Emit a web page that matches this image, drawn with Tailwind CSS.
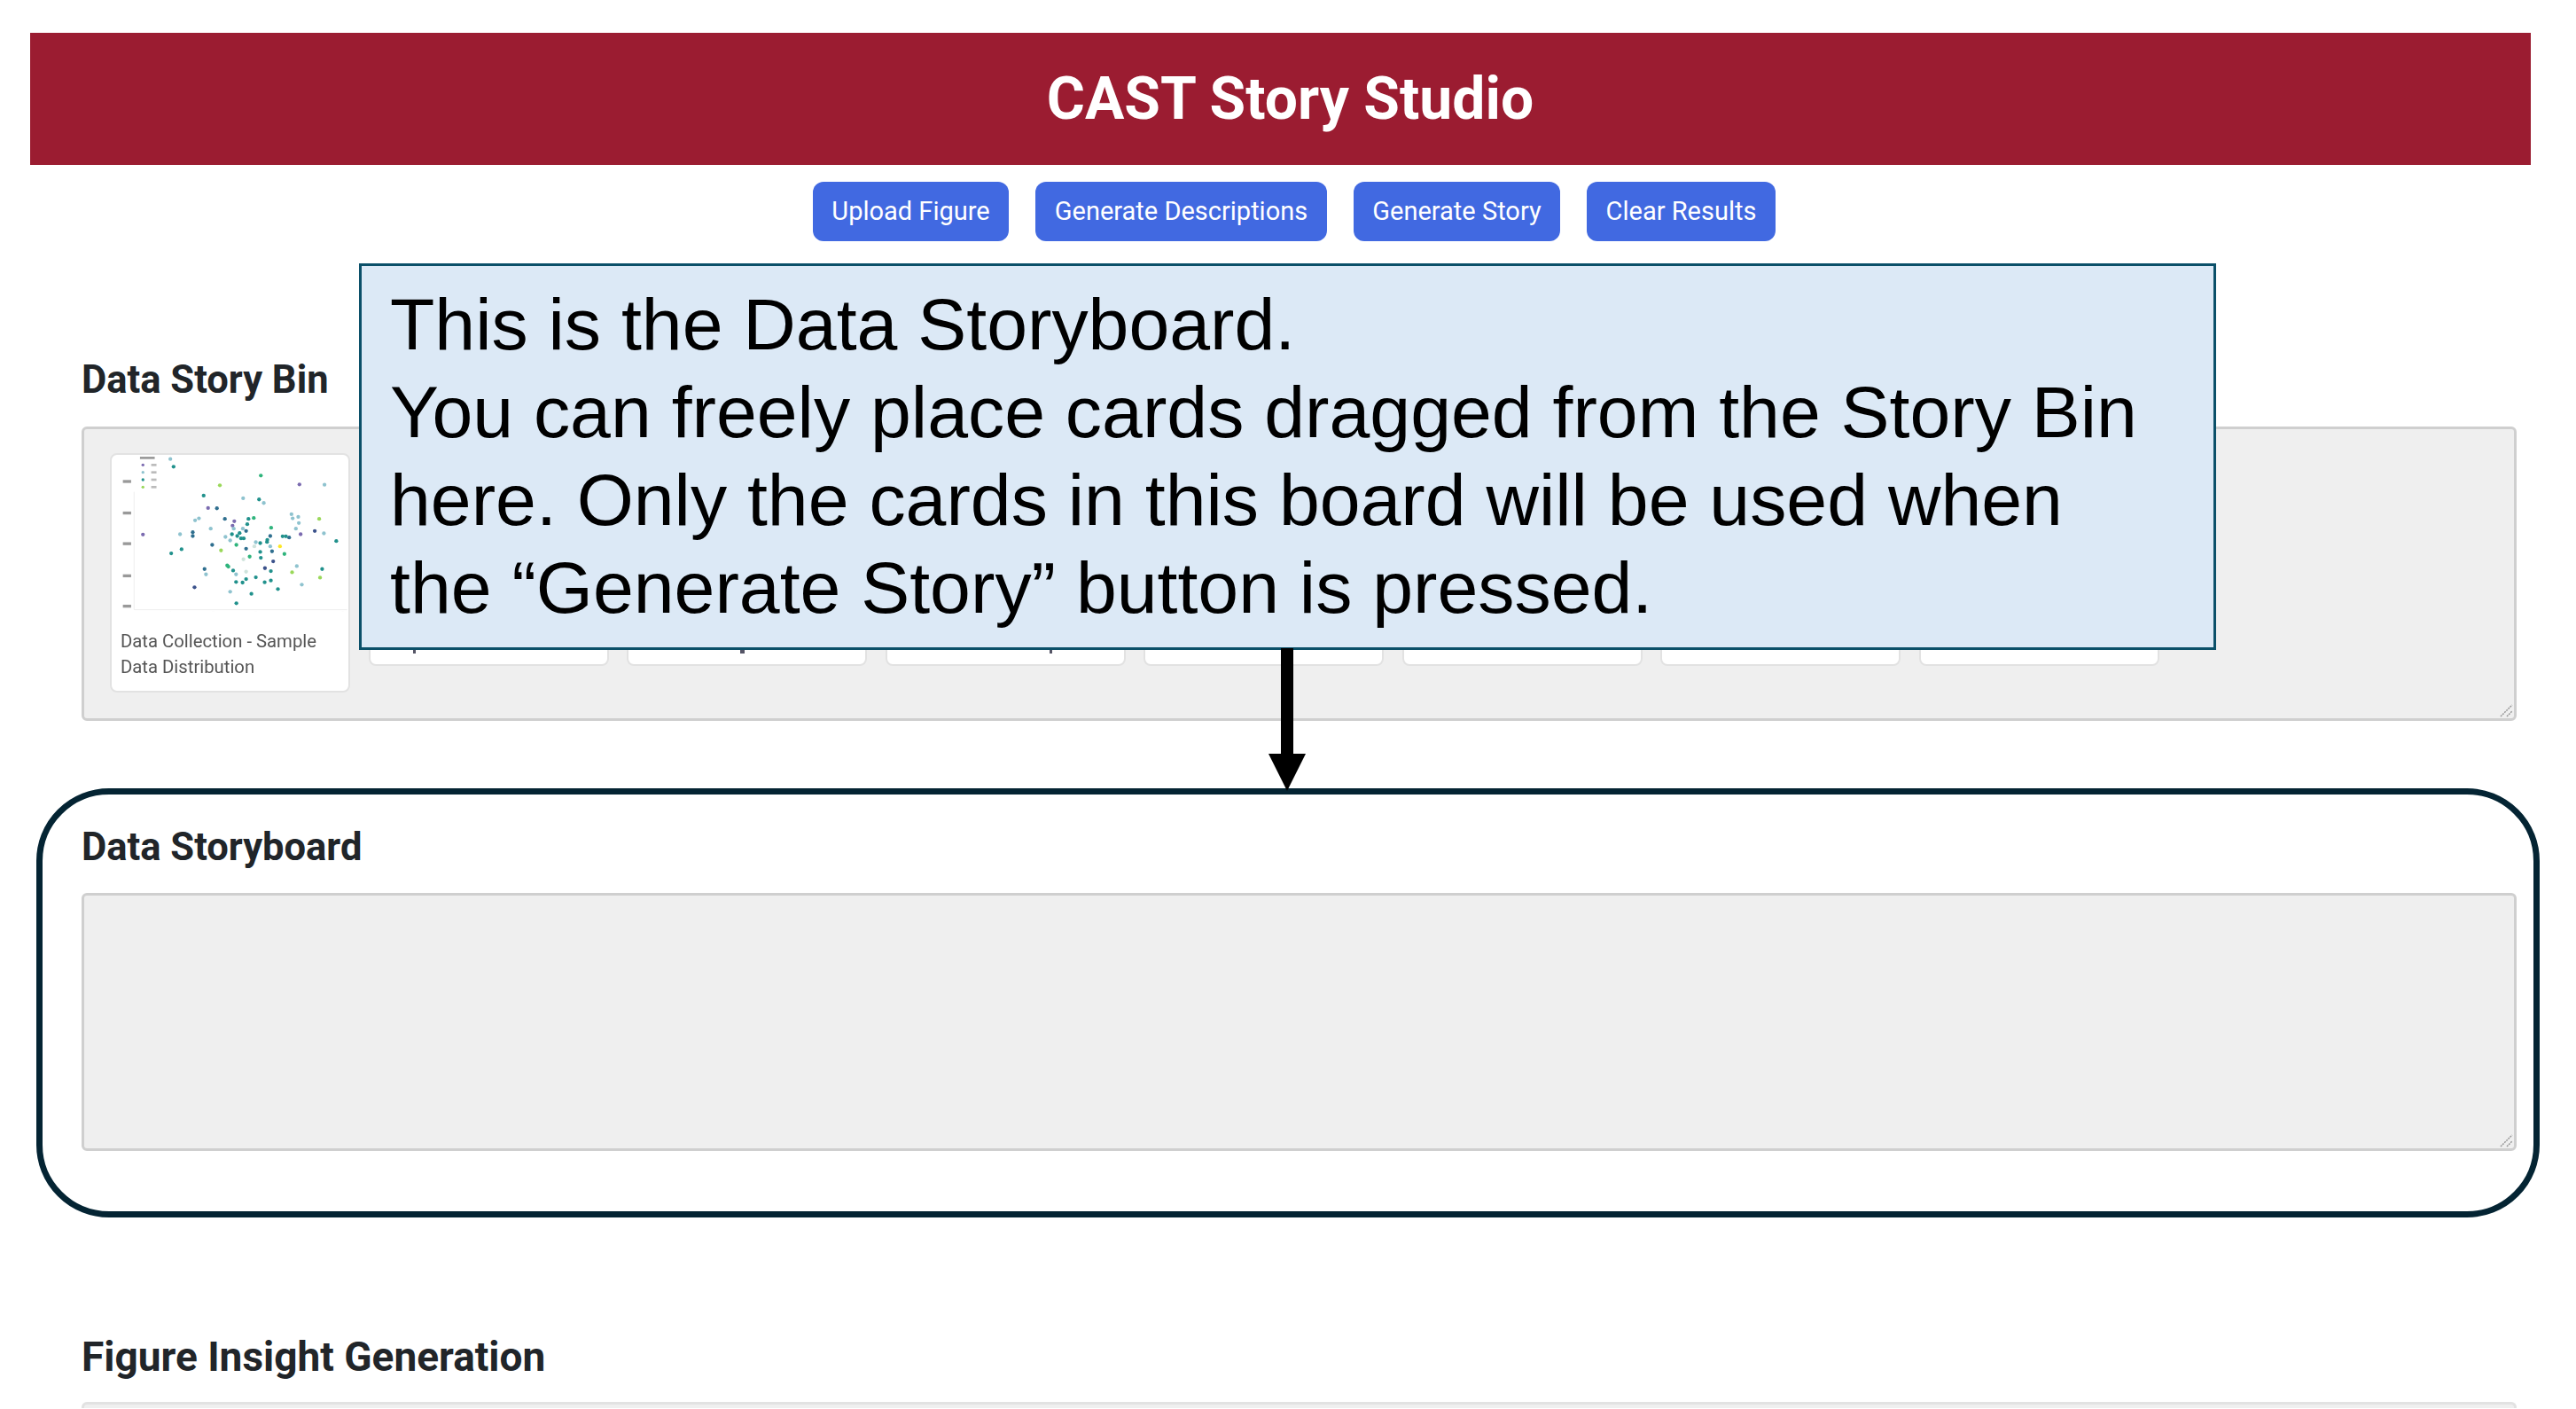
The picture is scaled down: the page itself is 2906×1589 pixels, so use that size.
<!DOCTYPE html>
<html lang="en" class="bg-white">
<head>
  <meta charset="UTF-8">
  <title>CAST Story Studio</title>
  <script src="https://cdn.jsdelivr.net/npm/@tailwindcss/browser@4"></script>
</head>
<body class="relative h-[1589px] overflow-hidden bg-white font-['Roboto',sans-serif]">
  <header class="ml-[34px] mt-[37px] flex h-[149px] w-[2821px] items-center justify-center bg-[#9b1c31] pl-[22px]">
    <h1 class="text-[66px] font-bold text-white">CAST Story Studio</h1>
  </header>

  <nav class="ml-[917px] mt-[19px] flex h-[67px] gap-[30px] text-[29px] text-white">
    <button class="w-[221px] rounded-[12px] bg-[#4169e1]">Upload Figure</button>
    <button class="w-[329px] rounded-[12px] bg-[#4169e1]">Generate Descriptions</button>
    <button class="w-[233px] rounded-[12px] bg-[#4169e1]">Generate Story</button>
    <button class="w-[213px] rounded-[12px] bg-[#4169e1]">Clear Results</button>
  </nav>

  <main class="ml-[92px] w-[2747px]">
    <h2 class="mt-[131px] text-[43.5px] leading-[52px] font-bold text-[#212529]">Data Story Bin</h2>
    <section class="relative mt-[26px] flex h-[332px] items-start gap-[20.5px] rounded-[6px] border-[3px] border-[#cfcfcf] bg-[#efefef] pl-[29px] pt-[27px]">
      <div class="h-[270px] w-[271px] shrink-0 overflow-hidden rounded-[8px] border-2 border-[#e2e2e2] bg-white">
        <svg id="scatter" width="266" height="177" viewBox="136 100 800 532" class="blur-[0.7px]"></svg>
        <p class="ml-[10px] mt-[19px] text-[20.3px] leading-[29px] text-[#555] blur-[0.4px]">Data Collection - Sample Data Distribution</p>
      </div>
      <div class="h-[240px] w-[271px] shrink-0 rounded-[8px] border-2 border-[#e2e2e2] bg-white"><div class="ml-[48px] mt-[219px] h-[5px] w-[3px] bg-[#556]"></div></div>
      <div class="h-[240px] w-[271px] shrink-0 rounded-[8px] border-2 border-[#e2e2e2] bg-white"><div class="ml-[126px] mt-[219px] h-[5px] w-[5px] bg-[#556]"></div></div>
      <div class="h-[240px] w-[271px] shrink-0 rounded-[8px] border-2 border-[#e2e2e2] bg-white"><div class="ml-[183px] mt-[219px] h-[5px] w-[3px] bg-[#556]"></div></div>
      <div class="h-[240px] w-[271px] shrink-0 rounded-[8px] border-2 border-[#e2e2e2] bg-white"></div>
      <div class="h-[240px] w-[271px] shrink-0 rounded-[8px] border-2 border-[#e2e2e2] bg-white"></div>
      <div class="h-[240px] w-[271px] shrink-0 rounded-[8px] border-2 border-[#e2e2e2] bg-white"></div>
      <div class="h-[240px] w-[271px] shrink-0 rounded-[8px] border-2 border-[#e2e2e2] bg-white"></div>
      <svg class="absolute bottom-[1px] right-[1px]" width="16" height="16" viewBox="0 0 16 16"><path d="M2 15L15 2M9 15L15 9" stroke="#999" stroke-width="1.5" stroke-dasharray="2 1"/></svg>
    </section>

    <h2 class="mt-[117px] text-[43.5px] leading-[52px] font-bold text-[#212529]">Data Storyboard</h2>
    <section class="relative mt-[25px] h-[291px] rounded-[6px] border-[3px] border-[#cfcfcf] bg-[#efefef]">
      <svg class="absolute bottom-[1px] right-[1px]" width="16" height="16" viewBox="0 0 16 16"><path d="M2 15L15 2M9 15L15 9" stroke="#999" stroke-width="1.5" stroke-dasharray="2 1"/></svg>
    </section>

    <h2 class="mt-[206px] text-[46px] leading-[52px] font-bold text-[#212529]">Figure Insight Generation</h2>
    <section class="mt-[25px] h-[7px] rounded-t-[6px] border-x-[3px] border-t-[3px] border-[#e2e2e2] bg-[#efefef]"></section>
  </main>

  <!-- annotation layer -->
  <div class="absolute left-[41px] top-[889px] h-[484px] w-[2824px] rounded-[82px] border-[7px] border-[#042433]"></div>
  <div class="absolute left-[405px] top-[297px] h-[436px] w-[2095px] border-[3px] border-[#0b5069] bg-[#dce9f6] pl-[32px] pt-[16px] font-['Liberation_Sans',sans-serif] text-[82.4px] leading-[99px] whitespace-nowrap text-black">
    This is the Data Storyboard.<br>
    You can freely place cards dragged from the Story Bin<br>
    here. Only the cards in this board will be used when<br>
    the “Generate Story” button is pressed.
  </div>
  <svg class="absolute left-[1431px] top-[731px]" width="43" height="162" viewBox="0 0 43 162">
    <rect x="14" y="0" width="14" height="120" fill="#000"/>
    <path d="M0 119H42L21 161Z" fill="#000"/>
  </svg>

  <script>
    // scatter points of the thumbnail, grouped by colour
    const groups = {
      '#2f6f8f': [[520,317],[592,358],[411,362],[411,375],[674,375],[738,380],[477,405],[592,418],[680,427],[451,487],[493,281]],
      '#3b528b': [[825,358],[656,484],[417,549],[684,461]],
      '#7b6bb0': [[773,200],[552,325],[546,340],[242,370],[777,369],[463,280]],
      '#21918c': [[346,140],[448,238],[636,251],[596,335],[600,317],[544,369],[570,365],[562,375],[575,383],[584,383],[664,388],[663,395],[716,376],[727,376],[898,392],[640,399],[338,434],[373,420],[640,429],[642,449],[558,531],[580,533],[655,532],[676,526],[700,555],[610,571],[559,603],[850,487],[676,494],[548,492],[625,515],[592,521]],
      '#2fb47c': [[642,170],[618,314],[677,347],[559,405],[722,436],[528,475],[532,479],[604,445]],
      '#9ad85a': [[503,203],[840,317],[507,424],[748,498],[843,516]],
      '#fde725': [[707,410]],
      '#8fc3cf': [[335,114],[858,201],[582,247],[652,263],[746,301],[750,315],[769,310],[771,331],[432,315],[419,322],[550,350],[761,350],[472,350],[581,350],[368,369],[522,378],[538,390],[856,366],[625,396],[674,410],[456,505],[558,505],[764,477],[781,540],[538,564]],
      '#cfe3dc': [[620,410],[583,454],[592,496]]
    };
    let marks = '<path d="M212 225V625H935" fill="none" stroke="#eee" stroke-width="3"/>';
    // y axis labels, legend and x ticks
    [190,297,401,510,613].forEach(y => marks += `<rect x="174" y="${y-5}" width="28" height="10" fill="#999"/>`);
    [134,159,184,209].forEach((y, i) => marks += `<circle cx="242" cy="${y}" r="5" fill="${['#7b6bb0','#8fc3cf','#21918c','#9ad85a'][i]}"/><rect x="270" y="${y-4}" width="18" height="8" fill="#bbb"/>`);
    marks += '<rect x="232" y="106" width="50" height="8" fill="#999"/>';
    [335,480,625,772,920].forEach(x => marks += `<rect x="${x-3}" y="632" width="6" height="14" fill="#bbb"/>`);
    for (const [color, points] of Object.entries(groups)) {
      points.forEach(p => marks += `<circle cx="${p[0]}" cy="${p[1]}" r="6.5" fill="${color}"/>`);
    }
    document.getElementById('scatter').innerHTML = marks;
  </script>
</body>
</html>
